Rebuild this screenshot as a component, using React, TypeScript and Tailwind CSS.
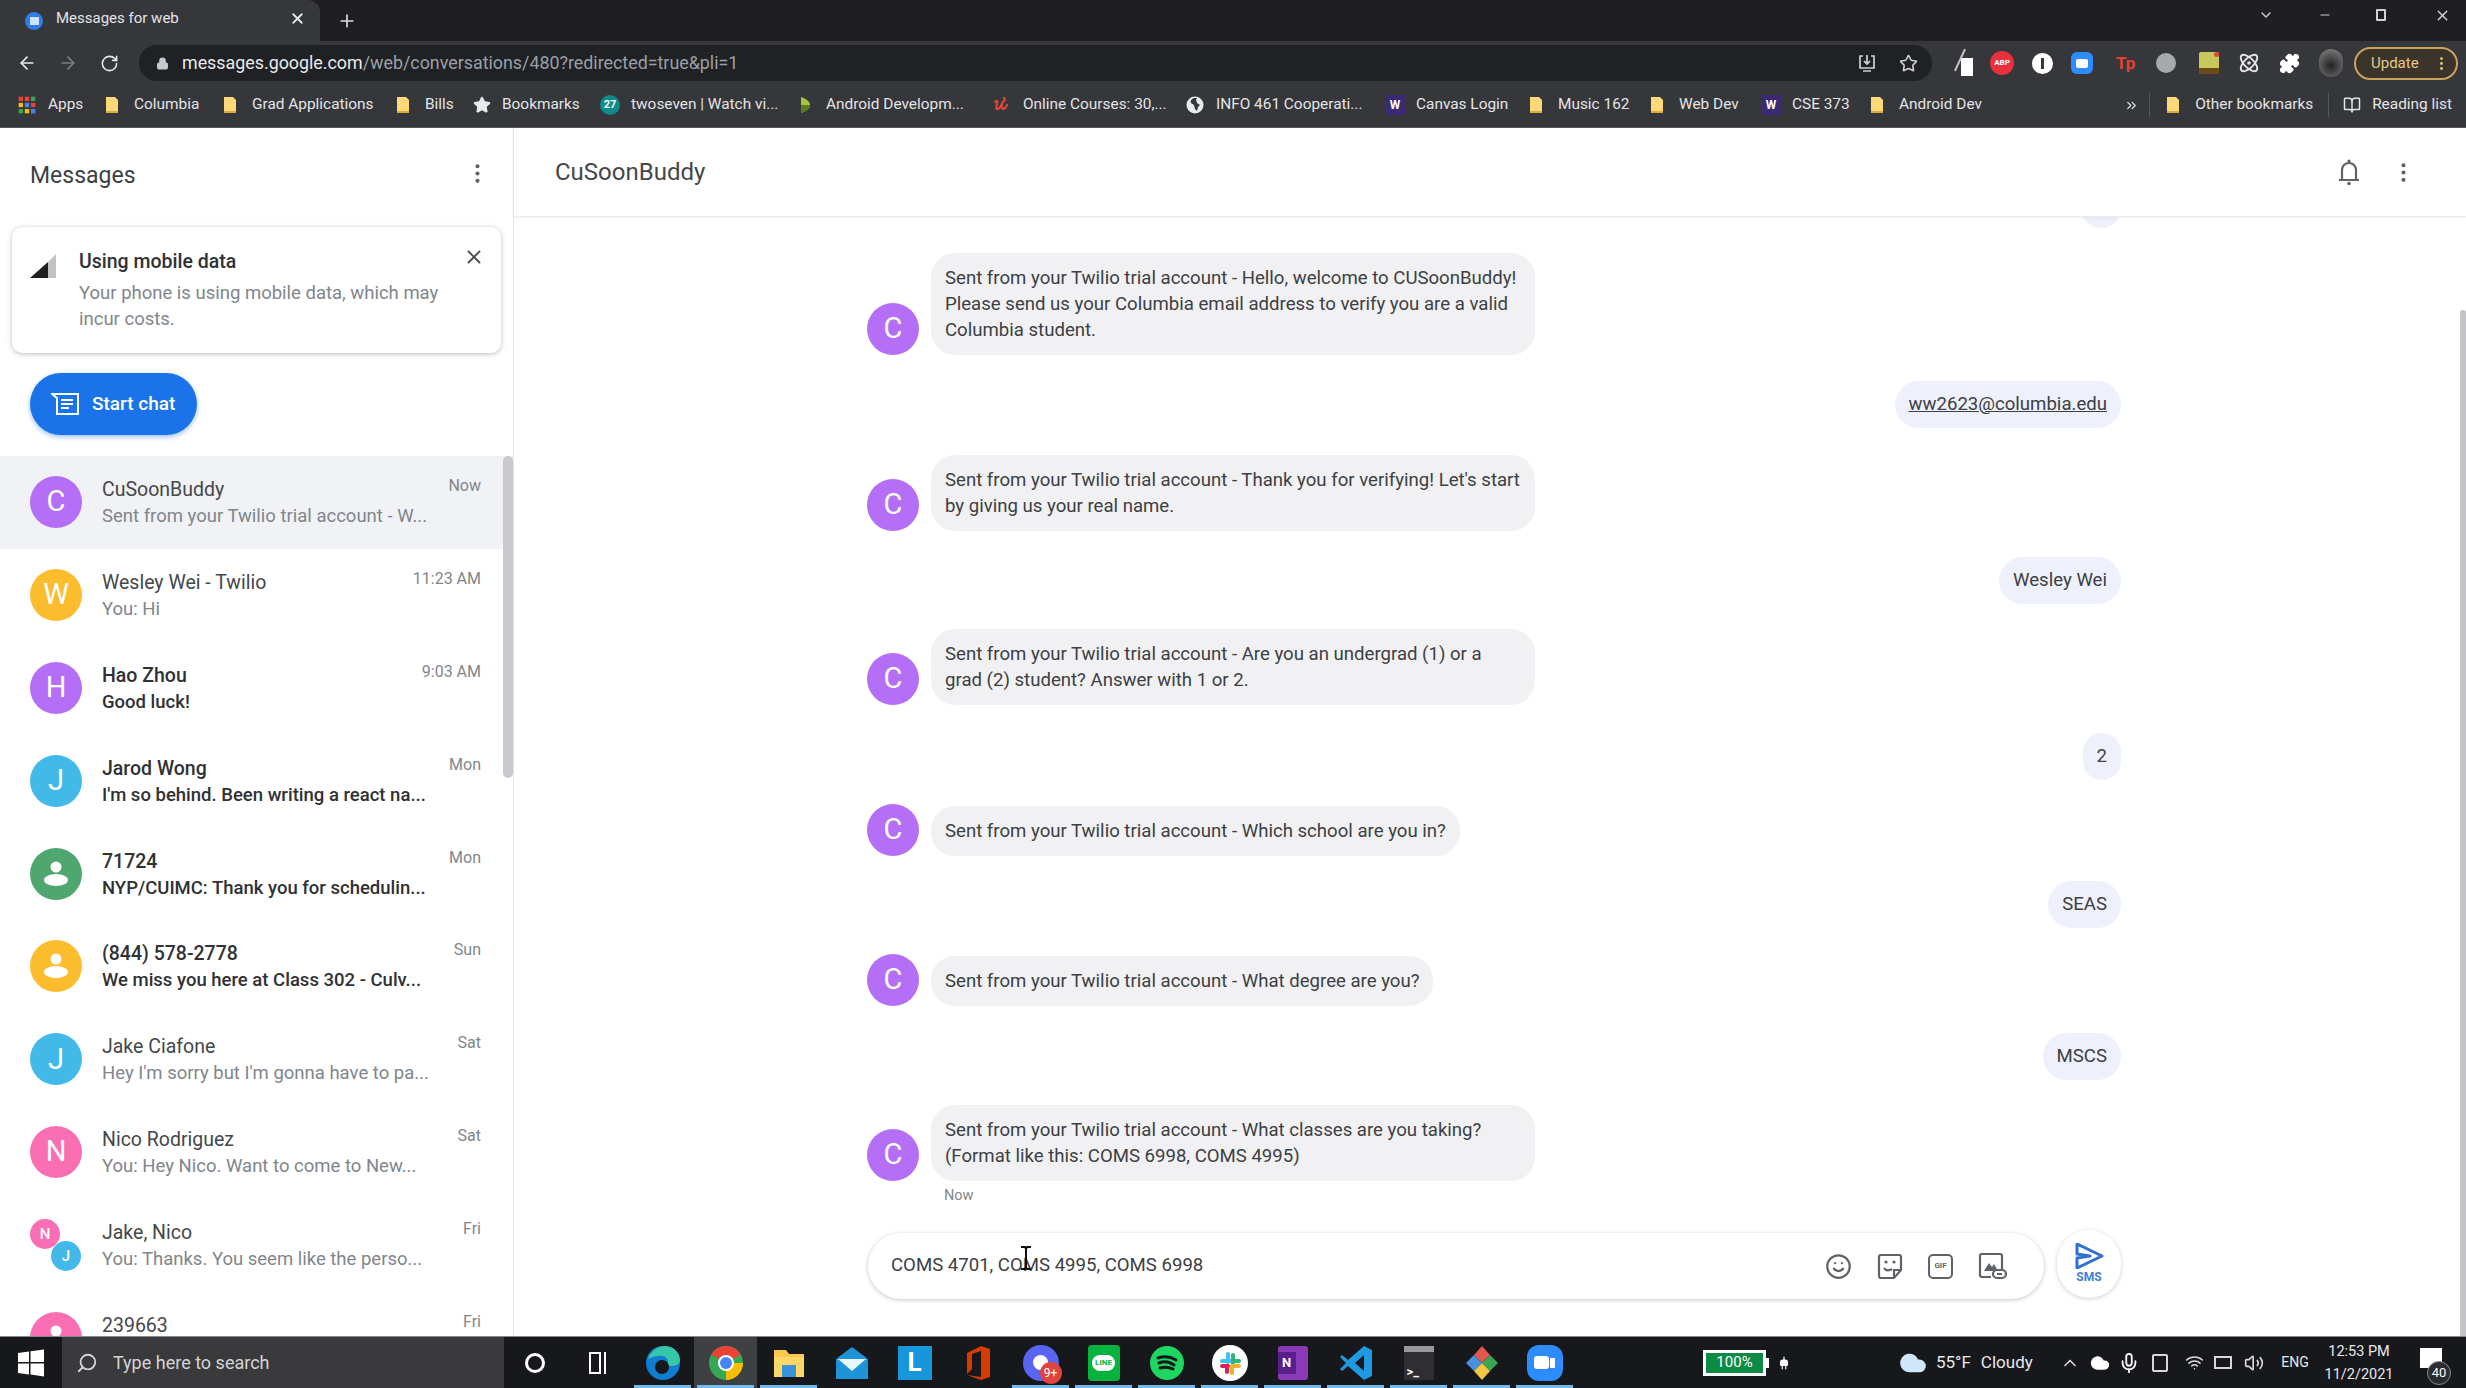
import React from "react";
import { ArrowLeft, ArrowRight, RotateCw, Lock, Star, Plus, X, MoreVertical, Smile, Search, ChevronUp, ChevronDown, Minus, Puzzle, Atom, Mic, Wifi, Volume2, Plug, Cloud, ChevronsRight, BookOpen } from "lucide-react";

const Folder = () => (
  <svg width="20" height="20" viewBox="0 0 20 20" className="shrink-0">
    <path d="M3 2h9l3 3v13H3z" fill="#fdd97a" />
    <path d="M3 16h12v2H3z" fill="#e0a93c" />
  </svg>
);

const Tile = ({ c, t, tc = "text-white" }: { c: string; t: string; tc?: string }) => (
  <span className={`w-5 h-5 shrink-0 flex items-center justify-center text-[12px] font-bold leading-none ${c} ${tc}`}>{t}</span>
);

const bookmarks = [
  { w: "w-[86px]", label: "Apps", icon: (
    <svg width="20" height="20" viewBox="0 0 12 12" className="shrink-0">
      <g>
        <rect x="1" y="1" width="2.6" height="2.6" fill="#ea4335" /><rect x="4.7" y="1" width="2.6" height="2.6" fill="#ea4335" /><rect x="8.4" y="1" width="2.6" height="2.6" fill="#34a853" />
        <rect x="1" y="4.7" width="2.6" height="2.6" fill="#fbbc04" /><rect x="4.7" y="4.7" width="2.6" height="2.6" fill="#4285f4" /><rect x="8.4" y="4.7" width="2.6" height="2.6" fill="#ea4335" />
        <rect x="1" y="8.4" width="2.6" height="2.6" fill="#34a853" /><rect x="4.7" y="8.4" width="2.6" height="2.6" fill="#fbbc04" /><rect x="8.4" y="8.4" width="2.6" height="2.6" fill="#4285f4" />
      </g>
    </svg>) },
  { w: "w-[118px]", label: "Columbia", icon: <Folder /> },
  { w: "w-[173px]", label: "Grad Applications", icon: <Folder /> },
  { w: "w-[79px]", label: "Bills", icon: <Folder /> },
  { w: "w-[127px]", label: "Bookmarks", icon: <Star size={18} className="shrink-0 fill-[#e8eaed] text-[#e8eaed]" /> },
  { w: "w-[195px]", label: "twoseven | Watch vi...", icon: <span className="w-5 h-5 shrink-0 rounded-full bg-[#0f8a8a] text-white text-[11px] font-bold flex items-center justify-center">27</span> },
  { w: "w-[197px]", label: "Android Developm...", icon: (
    <svg width="20" height="20" viewBox="0 0 20 20" className="shrink-0"><path d="M6 2c6 2 9 5 9 8s-3 6-9 8z" fill="#a4c639" /><path d="M6 10h9c0 3-3 6-9 8z" fill="#5c7a1f" /></svg>) },
  { w: "w-[193px]", label: "Online Courses: 30,...", icon: (
    <svg width="20" height="20" viewBox="0 0 20 20" className="shrink-0" fill="none" stroke="#e0453c" strokeWidth="2.2" strokeLinecap="round"><path d="M3 7c2-2 3-1 2 2s-1 6 1 5 4-5 5-8c-1 3-2 8 0 8s3-2 4-4M12 3c1 1 1 2 0 3" /></svg>) },
  { w: "w-[200px]", label: "INFO 461 Cooperati...", icon: (
    <svg width="20" height="20" viewBox="0 0 20 20" className="shrink-0"><circle cx="10" cy="10" r="8.5" fill="#e8eaed" /><path d="M9 3c-3 1-4 3-3 5l3 2 1 4 2 2 1-4 2-2-3-2-1-3 1-2z" fill="#35363a" /></svg>) },
  { w: "w-[142px]", label: "Canvas Login", icon: <Tile c="bg-[#3b2a73]" t="W" /> },
  { w: "w-[121px]", label: "Music 162", icon: <Folder /> },
  { w: "w-[113px]", label: "Web Dev", icon: <Folder /> },
  { w: "w-[107px]", label: "CSE 373", icon: <Tile c="bg-[#3b2a73]" t="W" /> },
  { w: "w-[120px]", label: "Android Dev", icon: <Folder /> },
];

const Bookmark = ({ w, label, icon }: { w?: string; label: string; icon: React.ReactNode }) => (
  <div className={`flex items-center gap-[11px] shrink-0 whitespace-nowrap text-[15.4px] text-[#e3e4e6] ${w ?? ""}`}>
    {icon}
    <span>{label}</span>
  </div>
);

const Person = ({ size = 30 }: { size?: number }) => (
  <svg width={size} height={size} viewBox="0 0 30 30">
    <circle cx="15" cy="8" r="5.5" fill="#fff" />
    <ellipse cx="15" cy="21" rx="12" ry="6" fill="#fff" />
  </svg>
);

const Avatar = ({ bg, letter, person }: { bg: string; letter?: string; person?: boolean }) => (
  <div className={`w-[52px] h-[52px] rounded-full shrink-0 flex items-center justify-center text-white text-[29px] ${bg}`}>
    {person ? <Person /> : letter}
  </div>
);

type Row = { name: string; preview: string; time: string; bg: string; letter?: string; person?: boolean; bold?: boolean; selected?: boolean; group?: boolean };

const rows: Row[] = [
  { name: "CuSoonBuddy", preview: "Sent from your Twilio trial account - W...", time: "Now", bg: "bg-[#b56ff6]", letter: "C", selected: true },
  { name: "Wesley Wei - Twilio", preview: "You: Hi", time: "11:23 AM", bg: "bg-[#fbbc2d]", letter: "W" },
  { name: "Hao Zhou", preview: "Good luck!", time: "9:03 AM", bg: "bg-[#b56ff6]", letter: "H", bold: true },
  { name: "Jarod Wong", preview: "I'm so behind. Been writing a react na...", time: "Mon", bg: "bg-[#42b9e8]", letter: "J", bold: true },
  { name: "71724", preview: "NYP/CUIMC: Thank you for schedulin...", time: "Mon", bg: "bg-[#4fa66f]", person: true, bold: true },
  { name: "(844) 578-2778", preview: "We miss you here at Class 302 - Culv...", time: "Sun", bg: "bg-[#fbbc2d]", person: true, bold: true },
  { name: "Jake Ciafone", preview: "Hey I'm sorry but I'm gonna have to pa...", time: "Sat", bg: "bg-[#42b9e8]", letter: "J" },
  { name: "Nico Rodriguez", preview: "You: Hey Nico. Want to come to New...", time: "Sat", bg: "bg-[#fa6fb4]", letter: "N" },
  { name: "Jake, Nico", preview: "You: Thanks. You seem like the perso...", time: "Fri", bg: "", group: true },
  { name: "239663", preview: "", time: "Fri", bg: "bg-[#fa6fb4]", person: true },
];

const ConversationRow = ({ r }: { r: Row }) => (
  <div className={`h-[92.9px] shrink-0 flex items-start pl-[30px] pr-[32px] pt-[20px] ${r.selected ? "bg-[#f1f2f6]" : ""}`}>
    {r.group ? (
      <div className="relative w-[52px] h-[52px] shrink-0">
        <div className="absolute left-0 top-0 w-[30px] h-[30px] rounded-full bg-[#fa6fb4] text-white text-[15px] font-medium flex items-center justify-center">N</div>
        <div className="absolute left-[21px] top-[22px] w-[30px] h-[30px] rounded-full bg-[#42b9e8] text-white text-[15px] font-medium flex items-center justify-center">J</div>
      </div>
    ) : (
      <Avatar bg={r.bg} letter={r.letter} person={r.person} />
    )}
    <div className="ml-[20px] flex-1 min-w-0 mt-[1px]">
      <div className={`text-[19.5px] leading-[26px] whitespace-nowrap ${r.bold ? "font-medium text-[#303134]" : "text-[#44474a]"}`}>{r.name}</div>
      <div className={`text-[18.5px] leading-[26px] whitespace-nowrap ${r.bold ? "font-medium text-[#303134]" : "text-[#80868b]"}`}>{r.preview}</div>
    </div>
    <div className="text-[16px] leading-[22px] -mt-[1px] text-[#80868b] whitespace-nowrap shrink-0">{r.time}</div>
  </div>
);

type Msg = { kind: "in" | "out"; lines?: string[]; text?: string; mt: string; link?: boolean };

const messages: Msg[] = [
  { kind: "in", mt: "mt-[25px]", lines: ["Sent from your Twilio trial account - Hello, welcome to CUSoonBuddy!", "Please send us your Columbia email address to verify you are a valid", "Columbia student."] },
  { kind: "out", mt: "mt-[26px]", text: "ww2623@columbia.edu", link: true },
  { kind: "in", mt: "mt-[27px]", lines: ["Sent from your Twilio trial account - Thank you for verifying! Let's start", "by giving us your real name."] },
  { kind: "out", mt: "mt-[26px]", text: "Wesley Wei" },
  { kind: "in", mt: "mt-[25px]", lines: ["Sent from your Twilio trial account - Are you an undergrad (1) or a", "grad (2) student? Answer with 1 or 2."] },
  { kind: "out", mt: "mt-[28px]", text: "2" },
  { kind: "in", mt: "mt-[24px]", lines: ["Sent from your Twilio trial account - Which school are you in?"] },
  { kind: "out", mt: "mt-[25px]", text: "SEAS" },
  { kind: "in", mt: "mt-[26px]", lines: ["Sent from your Twilio trial account - What degree are you?"] },
  { kind: "out", mt: "mt-[27px]", text: "MSCS" },
  { kind: "in", mt: "mt-[25px]", lines: ["Sent from your Twilio trial account - What classes are you taking?", "(Format like this: COMS 6998, COMS 4995)"] },
];

const Bubble = ({ m }: { m: Msg }) =>
  m.kind === "in" ? (
    <div className={`flex items-end ${m.mt}`}>
      <Avatar bg="bg-[#b56ff6]" letter="C" />
      <div className={`ml-[12px] bg-[#f1f1f3] rounded-[24px] px-[14px] py-[12px] text-[18.6px] leading-[26px] text-[#3c4043] whitespace-nowrap ${m.lines!.length > 1 ? "w-[604px]" : ""}`}>
        {m.lines!.map((l) => <div key={l}>{l}</div>)}
      </div>
    </div>
  ) : (
    <div className={`flex justify-end ${m.mt}`}>
      <div className={`h-[47px] bg-[#eef0fb] rounded-[24px] px-[14px] flex items-center text-[18.6px] text-[#3c4043] whitespace-nowrap ${m.link ? "underline" : ""}`}>{m.text}</div>
    </div>
  );

const Sms = () => (
  <svg width="30" height="26" viewBox="0 0 30 26">
    <path d="M3 1l25 12L3 25V15l13-2L3 11z" fill="none" stroke="#2f6fd6" strokeWidth="3" strokeLinejoin="round" />
  </svg>
);

const BellIcon = () => (
  <svg width="24" height="28" viewBox="0 0 24 28" className="ml-auto" fill="none" stroke="#5f6368" strokeWidth="2.2">
    <path d="M2 22h20M5 22V12c0-4 3-7 7-7s7 3 7 7v10" />
    <circle cx="12" cy="3" r="1.6" fill="#5f6368" stroke="none" />
    <circle cx="12" cy="25.5" r="1.8" fill="#5f6368" stroke="none" />
  </svg>
);

const StickerIcon = () => (
  <svg width="26" height="27" viewBox="0 0 26 27" fill="none" stroke="#5f6368" strokeWidth="2.2" className="ml-[25px]">
    <path d="M4 2h18a2 2 0 0 1 2 2v13l-7 8H4a2 2 0 0 1-2-2V4a2 2 0 0 1 2-2z" />
    <path d="M24 17h-7v8" />
    <circle cx="9" cy="9" r="1.6" fill="#5f6368" stroke="none" />
    <circle cx="17" cy="9" r="1.6" fill="#5f6368" stroke="none" />
    <path d="M7 15c2 3 5 3 8 1" />
  </svg>
);

const ImageLinkIcon = () => (
  <svg width="29" height="28" viewBox="0 0 29 28" fill="none" className="ml-[25px] mr-[37px]">
    <path d="M4 2h18a2 2 0 0 1 2 2v13M13 25H4a2 2 0 0 1-2-2V4a2 2 0 0 1 2-2" stroke="#5f6368" strokeWidth="2.2" />
    <path d="M6 19l5-8 3 4 2-3 4 7z" fill="#5f6368" />
    <rect x="15" y="18" width="13" height="8" rx="4" stroke="#5f6368" strokeWidth="2.2" />
    <path d="M19 22h5" stroke="#5f6368" strokeWidth="2" />
  </svg>
);

const Chrome = () => (
  <svg width="36" height="36" viewBox="0 0 36 36">
    <circle cx="18" cy="18" r="17" fill="#34a853" />
    <path d="M18 18L3.3 9.5A17 17 0 0 1 32.7 9.5z" fill="#ea4335" />
    <path d="M18 18h17A17 17 0 0 1 18 35z" fill="#fbbc04" />
    <circle cx="18" cy="18" r="8" fill="#fff" /><circle cx="18" cy="18" r="6" fill="#4285f4" />
  </svg>
);

const taskApps: { key: string; el: React.ReactNode; active?: boolean; on?: boolean }[] = [
  { key: "edge", on: true, el: <svg width="36" height="36" viewBox="0 0 36 36"><circle cx="18" cy="18" r="17" fill="#0f7ed1" /><path d="M3 14C6 5 14 1 20 1c9 0 15 7 15 14 0 5-5 6-9 6-2 0-4-1-3-3 1-4-4-8-9-7-5 0-9 2-11 3z" fill="#36c6a8" /><circle cx="17" cy="22" r="7" fill="#17181c" /></svg> },
  { key: "chrome", on: true, active: true, el: <Chrome /> },
  { key: "files", on: true, el: <svg width="34" height="32" viewBox="0 0 34 32"><path d="M2 3h12l3 4h15v23H2z" fill="#f8c94a" /><rect x="2" y="10" width="30" height="20" fill="#ffd766" /><rect x="10" y="18" width="14" height="12" fill="#3a93d8" /></svg> },
  { key: "mail", el: <svg width="34" height="34" viewBox="0 0 34 34"><path d="M17 1l16 12v20H1V13z" fill="#1f93da" /><path d="M3 13h28L17 25z" fill="#e8f6ff" /></svg> },
  { key: "l", el: <span className="w-[34px] h-[34px] bg-[#1796dc] flex items-center justify-center text-white text-[26px] font-bold">L</span> },
  { key: "office", el: <svg width="26" height="36" viewBox="0 0 26 36"><path d="M16 1l9 3v28l-9 3-14-5 14 2V6L7 9v15l-5 5V8z" fill="#d83b01" /></svg> },
  { key: "discord", on: true, el: <span className="relative w-[36px] h-[36px] rounded-full bg-[#5865f2] flex items-center justify-center"><span className="w-[15px] h-[15px] rounded-full bg-white" /><span className="absolute -right-[3px] -bottom-[3px] w-[22px] h-[22px] rounded-full bg-[#e0443e] text-white text-[12px] flex items-center justify-center">9+</span></span> },
  { key: "line", on: true, el: <span className="w-[32px] h-[36px] bg-[#06b33e] rounded-[4px] flex items-center justify-center"><span className="px-[3px] py-[4px] rounded-full bg-white text-[#06b33e] text-[8px] font-bold leading-none">LINE</span></span> },
  { key: "spotify", on: true, el: <svg width="36" height="36" viewBox="0 0 36 36"><circle cx="18" cy="18" r="17" fill="#1ed760" /><path d="M9 13c6-2 13-1 18 2M10 18c5-2 11-1 15 2M11 23c4-1 9-1 13 1" stroke="#17181c" strokeWidth="3" fill="none" strokeLinecap="round" /></svg> },
  { key: "slack", on: true, el: <svg width="36" height="36" viewBox="0 0 36 36"><rect width="36" height="36" rx="18" fill="#fff" /><rect x="8" y="14" width="12" height="4" rx="2" fill="#36c5f0" /><rect x="14" y="7" width="4" height="12" rx="2" fill="#36c5f0" /><rect x="19" y="8" width="4" height="12" rx="2" fill="#2eb67d" /><rect x="19" y="14" width="10" height="4" rx="2" fill="#2eb67d" /><rect x="18" y="19" width="11" height="4" rx="2" fill="#ecb22e" /><rect x="18" y="19" width="4" height="11" rx="2" fill="#ecb22e" /><rect x="8" y="19" width="10" height="4" rx="2" fill="#e01e5a" /><rect x="13" y="19" width="4" height="10" rx="2" fill="#e01e5a" /></svg> },
  { key: "onenote", on: true, el: <span className="w-[30px] h-[34px] bg-[#8a3ab9] rounded-[3px] flex items-center justify-start"><span className="w-[18px] h-[22px] bg-[#5b1f8a] text-white text-[13px] font-bold flex items-center justify-center">N</span></span> },
  { key: "vscode", on: true, el: <svg width="34" height="36" viewBox="0 0 34 36"><path d="M25 1l8 4v26l-8 4L9 21l-6 5-2-2 6-6-6-6 2-2 6 5z M25 10l-9 8 9 8z" fill="#1e9ae0" fillRule="evenodd" /></svg> },
  { key: "term", on: true, el: <span className="w-[30px] h-[34px] bg-[#2f2f33] border-t-[6px] border-[#9a9a9e] flex items-end justify-start pl-[3px] pb-[2px] text-white text-[13px] font-bold leading-none">&gt;_</span> },
  { key: "git", on: true, el: <svg width="34" height="36" viewBox="0 0 34 36"><path d="M17 1l8 9-8 8-8-8z" fill="#e4584c" /><path d="M25 10l8 8-8 8-8-8z" fill="#3aa655" /><path d="M9 10l8 8-8 8-8-8z" fill="#4a8fe0" /><path d="M17 18l8 8-8 9-8-9z" fill="#f2c744" /></svg> },
  { key: "zoom", on: true, el: <span className="w-[36px] h-[36px] rounded-[12px] bg-[#2d8cff] flex items-center justify-center gap-[1px]"><span className="w-[15px] h-[13px] bg-white rounded-[3px]" /><span className="w-[5px] h-[10px] bg-white rounded-[1px]" /></span> },
];

const exts = [
  { k: "pen", ml: "ml-[17px]", el: <span className="relative w-[24px] h-[30px] block"><span className="absolute left-[12px] top-[10px] w-[12px] h-[18px] bg-white" /><span className="absolute left-[10px] top-0 w-[2px] h-[24px] bg-[#c8c8c8] rotate-[25deg]" /></span> },
  { k: "abp", ml: "ml-[17px]", el: <span className="w-[24px] h-[24px] rounded-full bg-[#e8313d] text-white text-[8px] font-bold flex items-center justify-center">ABP</span> },
  { k: "w", ml: "ml-[18px]", el: <span className="w-[21px] h-[21px] rounded-full bg-white flex items-center justify-center"><span className="w-[3px] h-[11px] bg-[#35363a]" /></span> },
  { k: "zoom", ml: "ml-[18px]", el: <span className="w-[22px] h-[22px] rounded-[6px] bg-[#2d8cff] flex items-center justify-center"><span className="w-[12px] h-[9px] bg-white rounded-[2px]" /></span> },
  { k: "tp", ml: "ml-[23px]", el: <span className="w-[20px] text-[#e8412f] text-[17px] font-bold leading-none">Tp</span> },
  { k: "tom", ml: "ml-[20px]", el: <span className="w-[20px] h-[20px] rounded-full bg-[#a8a9ac] block" /> },
  { k: "sq", ml: "ml-[23px]", el: <span className="relative w-[20px] h-[22px] rounded-[2px] bg-[#c8c85a] block"><span className="absolute left-0 bottom-0 w-full h-[6px] bg-[#6b4a1c]" /><span className="absolute right-0 top-0 w-[5px] h-[5px] rounded-full bg-[#e0443e]" /></span> },
  { k: "atom", ml: "ml-[19px]", el: <Atom size={22} className="text-[#e3e4e6]" /> },
  { k: "puz", ml: "ml-[19px]", el: <Puzzle size={21} className="fill-white text-white" /> },
  { k: "av", ml: "ml-[19px]", el: <span className="w-[24px] h-[28px] rounded-full bg-[radial-gradient(circle_at_50%_60%,#222,#8a8a8a)] block" /> },
];

export default function App() {
  return (
    <div className="w-[2466px] h-[1388px] overflow-hidden flex flex-col bg-white [font-family:Roboto,'Liberation_Sans',sans-serif]">
      {/* tab strip */}
      <div className="h-[41px] shrink-0 bg-[#1f1f22] flex items-end">
        <div className="w-[320px] h-[41px] bg-[#36373b] rounded-tr-[12px] flex items-center pl-[25px] pr-[14px]">
          <span className="w-[18px] h-[18px] rounded-full bg-[#2f7de8] flex items-center justify-center"><span className="w-[9px] h-[8px] bg-[#cfe2fb]" /></span>
          <span className="ml-[13px] text-[15px] text-[#e3e4e6] flex-1 -mt-[4px]">Messages for web</span>
          <X size={17} className="text-[#e8eaed] -mt-[4px]" strokeWidth={2.5} />
        </div>
        <Plus size={20} className="ml-[17px] mb-[10px] text-[#dadce0]" />
        <div className="ml-auto self-start flex items-center h-[30px] text-[#d0d1d3]">
          <ChevronDown size={16} className="-ml-[3px]" />
          <Minus size={14} className="ml-[44px]" />
          <span className="ml-[44px] w-[10px] h-[12px] border-2 border-[#d0d1d3] rounded-[1px]" />
          <X size={17} className="ml-[48px] mr-[15px]" />
        </div>
      </div>
      {/* toolbar */}
      <div className="h-[44px] shrink-0 bg-[#36373b] flex items-center pl-[17px]">
        <ArrowLeft size={20} className="text-[#e8eaed]" />
        <ArrowRight size={20} className="ml-[21px] text-[#7d7f83]" />
        <RotateCw size={19} className="ml-[22px] text-[#e8eaed]" />
        <div className="ml-[20px] w-[1793px] h-[36px] rounded-full bg-[#202124] flex items-center pl-[17px] pr-[14px]">
          <Lock size={13} className="text-[#c8c9cb] fill-[#c8c9cb]" />
          <span className="ml-[13px] text-[17.85px] whitespace-nowrap text-[#e8eaed]">messages.google.com<span className="text-[#9aa0a6]">/web/conversations/480?redirected=true&amp;pli=1</span></span>
          <svg width="20" height="20" viewBox="0 0 20 20" className="ml-auto text-[#d0d1d3]" fill="none" stroke="currentColor" strokeWidth="1.7"><path d="M6 3H3v12h14V3h-3M10 2v9M7 8l3 3 3-3M6 18h8" /></svg>
          <Star size={19} className="ml-[22px] text-[#d0d1d3]" />
        </div>
        {exts.map((e) => <div key={e.k} className={`${e.ml} shrink-0 flex items-center`}>{e.el}</div>)}
        <div className="ml-[11px] w-[104px] h-[33px] rounded-full border-2 border-[#c9a45c] bg-[#3a342a] flex items-center justify-between pl-[15px] pr-[6px] text-[15px] text-[#e6c88a] shrink-0">
          Update
          <MoreVertical size={17} className="text-[#e6c88a]" />
        </div>
      </div>
      {/* bookmarks */}
      <div className="h-[43px] shrink-0 bg-[#36373b] border-b border-[#55565a] flex items-center pl-[17px] pr-[14px] pb-[2px]">
        {bookmarks.map((b) => <Bookmark key={b.label} {...b} />)}
        <div className="ml-auto flex items-center shrink-0">
          <ChevronsRight size={15} className="text-[#e3e4e6]" />
          <span className="ml-[10px] w-px h-[24px] bg-[#55565a]" />
          <div className="ml-[14px] w-[164px] flex"><Bookmark label="Other bookmarks" icon={<Folder />} /></div>
          <span className="w-px h-[24px] bg-[#55565a]" />
          <div className="ml-[14px] flex"><Bookmark label="Reading list" icon={<BookOpen size={18} className="text-[#e3e4e6]" />} /></div>
        </div>
      </div>

      {/* app */}
      <div className="flex-1 min-h-0 flex relative">
        <aside className="w-[514px] shrink-0 border-r border-[#e4e4e7] flex flex-col overflow-hidden relative">
          <div className="h-[99px] shrink-0 flex items-center justify-between pl-[30px] pr-[23px]">
            <span className="text-[23px] text-[#3c4043] -mt-[2px]">Messages</span>
            <MoreVertical size={25} className="text-[#5f6368] -mt-[8px]" />
          </div>
          <div className="mx-[12px] h-[126px] shrink-0 rounded-[10px] bg-white shadow-[0_1px_5px_rgba(60,64,67,0.35)] flex items-start pl-[18px] pr-[16px] pt-[22px]">
            <svg width="26" height="26" viewBox="0 0 26 26" className="shrink-0 mt-[4px]"><path d="M0 25L18 9v16z" fill="#1f1f1f" /><path d="M18 9l8-8v24h-8z" fill="#c2c2c2" /></svg>
            <div className="ml-[23px] flex-1">
              <div className="text-[19.5px] leading-[26px] font-medium text-[#303134]">Using mobile data</div>
              <div className="text-[18.5px] leading-[25.5px] text-[#80868b] mt-[6px]">Your phone is using mobile data, which may<br />incur costs.</div>
            </div>
            <X size={22} className="text-[#4a4d50] shrink-0 -mt-[3px]" />
          </div>
          <div className="shrink-0 pl-[30px] mt-[20px]">
            <button className="w-[167px] h-[62px] rounded-full bg-[#1a73e8] shadow-[0_2px_5px_rgba(26,115,232,0.45)] flex items-center pl-[21px] text-white text-[19px] font-medium">
              <svg width="28" height="24" viewBox="0 0 28 24" fill="none" stroke="#fff" strokeWidth="2"><path d="M1 2h26v20H6V6z" strokeLinejoin="miter" /><path d="M10 8h12M10 12h12M10 16h8" /></svg>
              <span className="ml-[13px]">Start chat</span>
            </button>
          </div>
          <div className="mt-[21px] flex-1 min-h-0 overflow-hidden flex flex-col">
            {rows.map((r) => <ConversationRow key={r.name} r={r} />)}
          </div>
          <div className="absolute right-0 top-[328px] w-[10px] h-[322px] rounded-full bg-[#c9c9cd]" />
        </aside>

        <main className="flex-1 min-w-0 flex flex-col relative">
          <header className="h-[89px] shrink-0 border-b border-[#ececee] shadow-[0_1px_3px_rgba(60,64,67,0.08)] flex items-center pl-[41px] pr-[50px] z-10 bg-white">
            <span className="text-[24px] text-[#44474a] -mt-[1px]">CuSoonBuddy</span>
            <BellIcon />
            <MoreVertical size={25} className="ml-[30px] text-[#5f6368]" />
          </header>
          <div className="flex-1 min-h-0 pl-[353px] overflow-hidden">
            <div className="w-[1254px]">
              <div className="flex justify-end -mt-[36px]"><div className="w-[40px] h-[47px] rounded-[24px] bg-[#eef0fb]" /></div>
              {messages.map((m, i) => <Bubble key={i} m={m} />)}
              <div className="pl-[77px] mt-[5px] text-[14.5px] leading-[20px] text-[#80868b]">Now</div>
            </div>
          </div>
          <div className="h-[103px] shrink-0 pl-[354px] flex items-start pt-[0px]">
            <div className="w-[1176px] h-[66px] rounded-[33px] bg-white shadow-[0_1px_4px_rgba(60,64,67,0.3)] flex items-center pl-[23px] text-[18.6px] text-[#3c4043]">
              <span className="-mt-[1px]">COMS 4701, COMS 4995, COMS 6998</span>
              <Smile size={27} className="ml-auto text-[#5f6368]" />
              <StickerIcon />
              <span className="ml-[25px] w-[25px] h-[25px] rounded-[5px] border-2 border-[#5f6368] text-[#5f6368] text-[8px] font-bold flex items-center justify-center">GIF</span>
              <ImageLinkIcon />
            </div>
            <div className="ml-[13px] w-[64px] h-[68px] -mt-[3px] rounded-full bg-white shadow-[0_1px_4px_rgba(60,64,67,0.25)] flex flex-col items-center justify-center">
              <Sms />
              <span className="text-[12px] font-bold leading-[16px] text-[#3f7fd8]">SMS</span>
            </div>
          </div>
          <div className="absolute right-0 top-[182px] bottom-0 w-[6px] rounded-t-[3px] bg-[#c4c4c8]" />
          <svg width="14" height="24" viewBox="0 0 14 24" className="absolute left-[505px] top-[1118px]" fill="none" stroke="#111" strokeWidth="2"><path d="M2 1h4l1 2 1-2h4M7 3v18M2 23h4l1-2 1 2h4" /></svg>
        </main>
      </div>

      {/* taskbar */}
      <div className="h-[52px] shrink-0 bg-[#17181c] border-t border-[#8a8a8c] flex items-stretch relative">
        <div className="w-[62px] shrink-0 flex items-center justify-center">
          <svg width="30" height="30" viewBox="0 0 30 30" fill="#fff"><path d="M2 5l11-1.5V14H2zM14.5 3.3L28 1.5V14H14.5zM2 15.5h11v11L2 25zM14.5 15.5H28v13l-13.5-2z" /></svg>
        </div>
        <div className="w-[442px] shrink-0 bg-[#3a3a3c] flex items-center pl-[14px] text-[#d4d4d6] text-[18px]">
          <Search size={22} className="scale-x-[-1] text-[#d4d4d6]" />
          <span className="ml-[15px]">Type here to search</span>
        </div>
        <div className="w-[62px] shrink-0 flex items-center justify-center"><span className="w-[20px] h-[20px] rounded-full border-[3px] border-white" /></div>
        <div className="w-[65px] shrink-0 flex items-center justify-center">
          <span className="w-[12px] h-[22px] border-2 border-white" /><span className="ml-[3px] w-[4px] h-[22px] border-l-2 border-white" />
        </div>
        {taskApps.map((a) => (
          <div key={a.key} className={`w-[63px] shrink-0 flex items-center justify-center relative ${a.active ? "bg-[#3f4044]" : ""}`}>
            {a.el}
            {a.on && <span className="absolute left-[3px] right-[3px] bottom-0 h-[3px] bg-[#76b9ed]" />}
          </div>
        ))}
        <div className="ml-[127px] w-[66px] shrink-0 flex items-center">
          <span className="w-[63px] h-[26px] border-[3px] border-white bg-[#0d8a43] text-white text-[15px] flex items-center justify-center">100%</span>
          <span className="w-[3px] h-[10px] bg-white" />
        </div>
        <div className="ml-[8px] w-[14px] shrink-0 flex items-center justify-center"><Plug size={18} className="text-white fill-white rotate-180" /></div>
        <div className="ml-[108px] w-[28px] shrink-0 flex items-center justify-center"><Cloud size={28} className="text-[#cfe6fb] fill-[#cfe6fb]" /></div>
        <div className="ml-[9px] w-[104px] shrink-0 flex items-center text-[17px] text-[#e8e8ea] whitespace-nowrap gap-[10px]"><span>55°F</span><span>Cloudy</span></div>
        <div className="ml-[19px] w-[22px] shrink-0 flex items-center justify-center"><ChevronUp size={20} className="text-[#d8d8da]" /></div>
        <div className="ml-[8px] w-[22px] shrink-0 flex items-center justify-center"><Cloud size={20} className="text-white fill-white" /></div>
        <div className="ml-[7px] w-[22px] shrink-0 flex items-center justify-center"><Mic size={22} className="text-white" /></div>
        <div className="ml-[9px] w-[22px] shrink-0 flex items-center justify-center"><span className="w-[16px] h-[18px] border-2 border-[#d8d8da] rounded-[2px] block" /></div>
        <div className="ml-[12px] w-[22px] shrink-0 flex items-center justify-center"><Wifi size={19} className="text-[#d8d8da]" /></div>
        <div className="ml-[7px] w-[22px] shrink-0 flex items-center justify-center"><span className="w-[18px] h-[13px] border-2 border-[#d8d8da] block" /></div>
        <div className="ml-[9px] w-[22px] shrink-0 flex items-center justify-center"><Volume2 size={20} className="text-[#d8d8da]" /></div>
        <div className="ml-[13px] w-[34px] shrink-0 flex items-center justify-center text-[14px] text-[#e8e8ea]">ENG</div>
        <div className="ml-[12px] w-[70px] shrink-0 flex flex-col items-center justify-center text-[14.5px] leading-[23px] text-[#e8e8ea] whitespace-nowrap">
          <span>12:53 PM</span>
          <span>11/2/2021</span>
        </div>
        <div className="ml-[23px] w-[34px] shrink-0 relative flex items-center justify-center">
          <span className="w-[22px] h-[20px] bg-white block -mt-[10px] -ml-[6px]" />
          <span className="absolute right-0 bottom-[3px] w-[24px] h-[24px] rounded-full bg-[#2b2c30] border border-[#8a8a8c] text-white text-[13px] flex items-center justify-center">40</span>
        </div>
      </div>
    </div>
  );
}
